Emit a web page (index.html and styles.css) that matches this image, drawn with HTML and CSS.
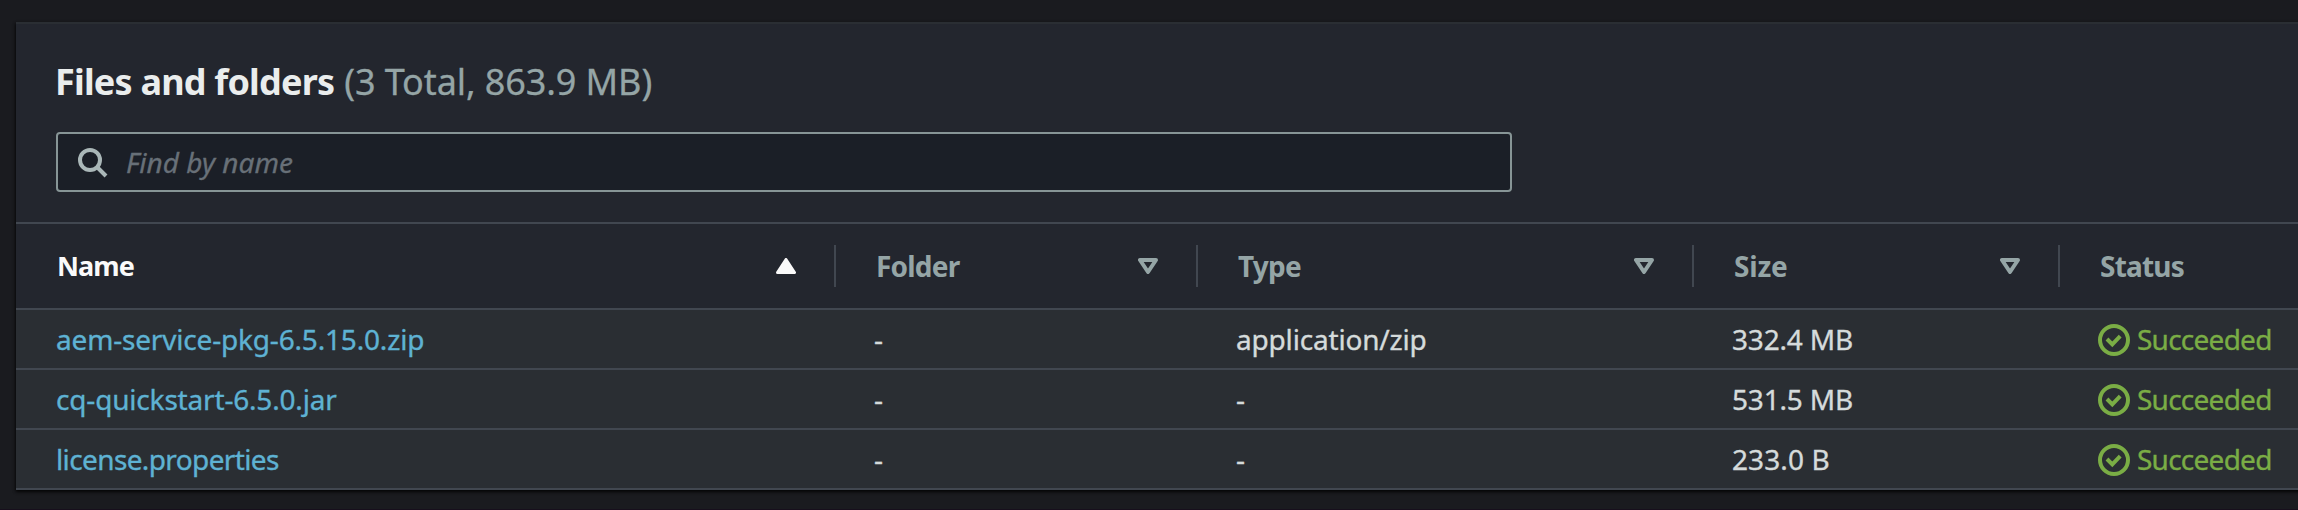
FILE: index.html
```
<!DOCTYPE html>
<html lang="en">
<head>
<meta charset="utf-8">
<title>Files and folders</title>
<link rel="stylesheet" href="styles.css">
</head>
<body>
<svg width="0" height="0" class="defs" aria-hidden="true">
  <symbol id="sort" viewBox="0 0 20 16"><path d="M2 2H18L10 14Z" fill="none" stroke="currentColor" stroke-width="4" stroke-linejoin="round"/></symbol>
  <symbol id="sort-asc" viewBox="0 0 20 16"><path d="M10 1.5L18.5 14.5H1.5Z" fill="currentColor" stroke="currentColor" stroke-width="3" stroke-linejoin="round"/></symbol>
  <symbol id="check" viewBox="0 0 32 32"><circle cx="16" cy="16" r="14" fill="none" stroke="currentColor" stroke-width="4"/><path d="M9 15L14.3 20.3L22.2 12.2" fill="none" stroke="currentColor" stroke-width="4"/></symbol>
</svg>
<main class="card">
  <header class="card-header">
    <h2 class="title"><span class="title-text">Files and folders</span> <span class="count">(3 Total, 863.9 MB)</span></h2>
    <div class="search">
      <svg class="search-icon" viewBox="0 0 30 30"><circle cx="12" cy="12" r="10" fill="none" stroke="currentColor" stroke-width="4"/><path d="M19 19L28 28" stroke="currentColor" stroke-width="4"/></svg>
      <span class="placeholder">Find by name</span>
    </div>
  </header>
  <div class="row head">
    <div class="th active"><span class="name-label">Name</span><svg class="sort"><use href="#sort-asc"/></svg></div>
    <div class="th"><span>Folder</span><svg class="sort"><use href="#sort"/></svg></div>
    <div class="th"><span>Type</span><svg class="sort"><use href="#sort"/></svg></div>
    <div class="th"><span class="size-label">Size</span><svg class="sort"><use href="#sort"/></svg></div>
    <div class="th"><span>Status</span></div>
  </div>
  <div class="row">
    <div class="td link">aem-service-pkg-6.5.15.0.zip</div><div class="td">-</div><div class="td">application/zip</div><div class="td">332.4 MB</div>
    <div class="td status"><svg class="check"><use href="#check"/></svg><span>Succeeded</span></div>
  </div>
  <div class="row">
    <div class="td link">cq-quickstart-6.5.0.jar</div><div class="td">-</div><div class="td">-</div><div class="td">531.5 MB</div>
    <div class="td status"><svg class="check"><use href="#check"/></svg><span>Succeeded</span></div>
  </div>
  <div class="row">
    <div class="td link narrow">license.properties</div><div class="td">-</div><div class="td">-</div><div class="td wide">233.0 B</div>
    <div class="td status"><svg class="check"><use href="#check"/></svg><span>Succeeded</span></div>
  </div>
</main>
</body>
</html>
```
FILE: styles.css
```
* { box-sizing: border-box; }
body {
  margin: 0;
  padding: 22px 0 0 16px;
  height: 510px;
  overflow: hidden;
  background: #1a1b1f;
  border-bottom: 1px solid #170f1c;
  font: 28px/40px "Noto Sans", "Open Sans", sans-serif;
  color: #d5dbdb;
}
.defs { position: absolute; }
.card {
  width: 2300px;
  height: 468px;
  background: #23262e;
  border-top: 2px solid #2a2e33;
  box-shadow: 0 2px 3px rgba(0, 0, 0, .7), -1px 1px 3px rgba(0, 0, 0, .4);
}
.card-header {
  height: 198px;
  padding: 34px 40px 0;
}
.title {
  margin: 0 0 27px -1px;
  font-size: 36px;
  line-height: 47px;
  color: #eaeded;
  white-space: nowrap;
  display: flex;
  gap: 10px;
}
.title-text { font-weight: 700; letter-spacing: -.8px; }
.count { font-weight: 400; letter-spacing: -.1px; color: #95a5a6; -webkit-text-stroke: .3px; }
.search {
  width: 1456px;
  height: 60px;
  display: flex;
  align-items: center;
  gap: 18px;
  padding-left: 20px;
  background: #1b1f27;
  border: 2px solid #879596;
  border-radius: 4px;
}
.search-icon { width: 30px; height: 30px; margin-top: 2px; color: #aab7b8; }
.placeholder { font-style: italic; color: #687078; -webkit-text-stroke: .3px; }
.row {
  display: grid;
  grid-template-columns: 820px 362px 496px 366px 1fr;
  align-items: center;
  height: 60px;
  background: #2a2e33;
  border-bottom: 2px solid #414750;
}
.head {
  height: 88px;
  background: #23262e;
  border-top: 2px solid #414750;
}
.th {
  display: flex;
  justify-content: space-between;
  align-items: center;
  height: 42px;
  padding: 0 38px 0 40px;
  border-right: 2px solid #414750;
  font-weight: 700;
  letter-spacing: -.8px;
  color: #95a5a6;
}
.th:last-child { border-right: 0; }
.th.active { color: #fafafa; padding-left: 41px; }
.name-label { font-size: 27px; letter-spacing: -.9px; }
.size-label { letter-spacing: -.2px; }
.sort { width: 20px; height: 16px; }
.td {
  padding-left: 38px;
  letter-spacing: -.18px;
  white-space: nowrap;
  -webkit-text-stroke: .35px;
}
.link { padding-left: 40px; color: #5eb2d3; }
.narrow { letter-spacing: -.62px; }
.wide { letter-spacing: .1px; }
.status {
  display: flex;
  align-items: center;
  gap: 7px;
  letter-spacing: -.75px;
  color: #7aad45;
}
.check { width: 32px; height: 32px; margin-top: 2px; }
```
